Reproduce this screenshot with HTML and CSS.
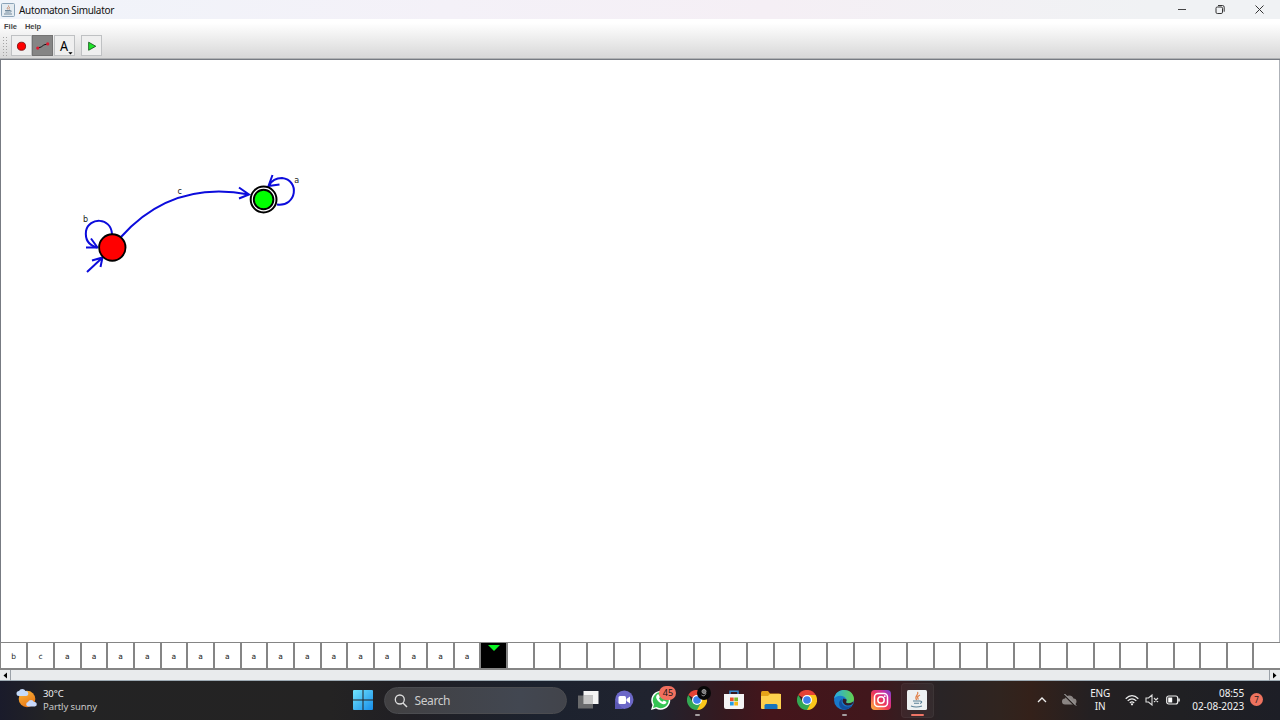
FILE: index.html
```html
<!DOCTYPE html>
<html lang="en">
<head>
<meta charset="utf-8">
<title>Automaton Simulator</title>
<link rel="stylesheet" href="styles.css">
</head>
<body>
<div class="screen">
  <header class="titlebar">
    <svg class="app-icon" width="14" height="14" viewBox="0 0 14 14"><rect x=".5" y=".5" width="13" height="13" rx="1" fill="#e4ebf1" stroke="#8ba3b8"/><path d="M7.500 2.500c1 1.500-2.500 2-.7 4M9 4c-1 .8-1.500 1.300-.5 2.500" fill="none" stroke="#c98a6a"/><path d="M4 7.500h5.500M4.300 9h4.500M3 11h8M9.500 7.500q2 .5-.5 1.800" fill="none" stroke="#71899c"/></svg>
    <span class="title">Automaton Simulator</span>
    <div class="window-controls">
      <svg width="39" height="19" viewBox="0 0 39 19"><path d="M16 9.500h8" stroke="#444"/></svg>
      <svg width="39" height="19" viewBox="0 0 39 19"><rect x="15" y="7" width="6.500" height="6.500" rx="1.300" fill="none" stroke="#333"/><path d="M17 5.500h4.500q1.700 0 1.700 1.700v4.500" fill="none" stroke="#333"/></svg>
      <svg width="39" height="19" viewBox="0 0 39 19"><path d="M15.500 5.500l8 8M23.500 5.500l-8 8" stroke="#333"/></svg>
    </div>
  </header>
  <div class="chrome">
    <nav class="menu"><span class="menu-file">File</span><span class="menu-help">Help</span></nav>
    <div class="toolbar">
      <span class="grip"></span>
      <span class="tool"><svg width="20" height="20" viewBox="0 0 20 20"><circle cx="10" cy="10.800" r="4.300" fill="#f00" stroke="#600" stroke-width=".8"/></svg></span>
      <span class="tool active"><svg width="20" height="20" viewBox="0 0 20 20"><path d="M5 12.500L9 11.500L11 9.500L15 8.500" fill="none" stroke="#111"/><circle cx="5" cy="12.700" r="1.700" fill="#e01930"/><circle cx="15.500" cy="8.300" r="1.700" fill="#e01930"/></svg></span>
      <span class="tool"><svg width="20" height="20" viewBox="0 0 20 20"><text class="tool-letter" x="9.500" y="15.500" text-anchor="middle" textLength="8.500" lengthAdjust="spacingAndGlyphs">A</text><path d="M14 17h4.500l-2.200 2.500z" fill="#000"/></svg></span>
      <span class="tool run"><svg width="20" height="20" viewBox="0 0 20 20"><path d="M7 6.500v8.500l7.500-4.200z" fill="#1fe52a" stroke="#14551c" stroke-width=".9"/></svg></span>
    </div>
  </div>
  <main class="canvas">
    <svg width="1278" height="583" viewBox="1 59 1278 583">
      <g class="edge">
        <path d="M112 234C111 217 89 217 86 231C85 239 88 245 97 247.500"/>
        <path d="M86 247.500h12M91 238.500l6.500 9"/>
        <path d="M87 272l15-14M92 260.500l10.500-3-2 9.500"/>
        <path d="M121 237Q172 180 249 194.500M239 187.500l10 7-10 4"/>
        <path d="M277 204.500C297 207 300 180 282 178Q273 178 269 185.500M272.500 175l-4 11 11-1.500"/>
      </g>
      <circle cx="112.300" cy="247.500" r="13.200" fill="#f00" stroke="#000" stroke-width="1.900"/>
      <circle cx="263.600" cy="199.500" r="12.900" fill="#fff" stroke="#000" stroke-width="2"/>
      <circle cx="263.600" cy="199.500" r="9.800" fill="#0f0" stroke="#000" stroke-width="1.900"/>
      <g class="edge-label"><text x="83" y="221.500">b</text><text x="177.500" y="194">c</text><text x="294.200" y="183">a</text></g>
    </svg>
  </main>
  <section class="tape">
    <span>b</span><span>c</span><span>a</span><span>a</span><span>a</span><span>a</span><span>a</span><span>a</span><span>a</span><span>a</span><span>a</span><span>a</span><span>a</span><span>a</span><span>a</span><span>a</span><span>a</span><span>a</span><span class="head"><svg width="12" height="6" viewBox="0 0 12 6"><path d="M0 0h12L6 6z" fill="#0cf424"/></svg></span><span></span><span></span><span></span><span></span><span></span><span></span><span></span><span></span><span></span><span></span><span></span><span></span><span></span><span></span><span></span><span></span><span></span><span></span><span></span><span></span><span></span><span></span><span></span><span></span><span></span><span></span><span></span><span></span><span></span>
  </section>
  <div class="scrollbar">
    <svg width="11" height="11" viewBox="0 0 11 11"><path d="M7 2.500v6L3.500 5.500z"/><path d="M10.500 0v11" stroke="#9ba1a8"/></svg>
    <svg width="11" height="11" viewBox="0 0 11 11"><path d="M4 2.500v6l3.500-3z"/><path d="M.5 0v11" stroke="#9ba1a8"/></svg>
  </div>
  <footer class="taskbar">
    <div class="weather">
      <svg width="22" height="22" viewBox="0 0 22 22"><defs><linearGradient id="sun" x2=".5" y2="1"><stop stop-color="#f9b83b"/><stop offset="1" stop-color="#e97817"/></linearGradient></defs><circle cx="11" cy="11" r="8.300" fill="url(#sun)"/><path d="M3 8a2.500 2.500 0 0 1 0-5 3.600 3.600 0 0 1 6.500 0 2.500 2.500 0 0 1 .5 5z" fill="#c5dbfa"/><path d="M12 18.500a2.300 2.300 0 0 1 0-4.500 3.300 3.300 0 0 1 6 0 2.300 2.300 0 0 1 1 4.500z" fill="#c9d8fa"/></svg>
      <div class="weather-text"><span class="temp">30°C</span><span class="sky">Partly sunny</span></div>
    </div>
    <svg class="start" width="20" height="20" viewBox="0 0 20 20"><defs><linearGradient id="win" x2="1" y2="1"><stop stop-color="#72e5fc"/><stop offset="1" stop-color="#168ce8"/></linearGradient></defs><path d="M0 1Q0 0 1 0h8.500v9.500H0zM10.500 0H19q1 0 1 1v8.500h-9.500zM0 10.500h9.500V20H1q-1 0-1-1zM10.500 10.500H20V19q0 1-1 1h-8.500z" fill="url(#win)"/></svg>
    <div class="search"><svg width="14" height="14" viewBox="0 0 14 14"><circle cx="5.800" cy="5.500" r="4.500" fill="none" stroke="#ddd" stroke-width="1.300"/><path d="M9 9l4 4" stroke="#ddd" stroke-width="1.500"/></svg><span>Search</span></div>
    <div class="apps">
      <span class="app"><svg width="22" height="20" viewBox="0 0 22 20"><rect x="6.500" y="1" width="15" height="13" fill="#f4f4f4"/><rect x="1" y="5.500" width="15" height="13" fill="#777" opacity=".85"/><path d="M6.500 5.500H16V14H6.500z" fill="#c5c5c5"/></svg></span>
      <span class="app"><svg width="20" height="20" viewBox="0 0 20 20"><circle cx="10.300" cy="9.700" r="9.200" fill="#6c68c8"/><path d="M1 10v9h8z" fill="#5b58b3"/><rect x="4.500" y="6" width="7.500" height="8" rx="1.500" fill="#fff"/><path d="M12.500 9l3.500-2.500v7L12.500 11z" fill="#fff"/></svg></span>
      <span class="app"><svg width="22" height="22" viewBox="0 0 22 22"><path d="M1 21l1.500-5A9.500 9.500 0 1 1 6 19.500z" fill="#fff"/><path d="M3 19l1-3.500a8 8 0 1 1 2.500 2.500z" fill="#35c454"/><path d="M7.300 5.500q1-.8 1.600.3l1 2.200-.9 1.400q1.200 2.400 3.500 3.300l1.300-1.300 2.500 1.300q.4.900-.5 1.900-2 1.500-5-.3-4-2.300-4.700-6 .1-1.800 1.200-2.800z" fill="#fff"/></svg><span class="badge">45</span></span>
      <span class="app"><svg width="20" height="20" viewBox="0 0 20 20"><path d="M10 10L1.300 5A10 10 0 0 1 18.700 5z" fill="#e64335"/><path d="M10 10V5h8.700A10 10 0 0 1 10 20z" fill="#fbc61b"/><path d="M10 20A10 10 0 0 1 1.300 5L6 12.500l8 0z" fill="#34a853"/><circle cx="10" cy="10" r="5" fill="#fff"/><circle cx="10" cy="10" r="3.800" fill="#3d7fea"/></svg><svg class="profile" width="14" height="14" viewBox="0 0 14 14"><circle cx="7" cy="7" r="7" fill="#080808"/><circle cx="7" cy="5.500" r="2" fill="#777" stroke="#999"/><path d="M4.500 9q3 2.500 4.500-2" stroke="#888" fill="none"/></svg><i class="mark"></i></span>
      <span class="app"><svg width="20" height="20" viewBox="0 0 20 20"><path d="M6 4V1.200h8V4" fill="none" stroke="#3689cf" stroke-width="1.500"/><path d="M0 4h20v13q0 2-2 2H2q-2 0-2-2z" fill="#f4f4f4"/><path d="M6 7.500h3.700v3.700H6z" fill="#ee5127"/><path d="M10.300 7.500H14v3.700h-3.700z" fill="#79b82d"/><path d="M6 11.800h3.700v3.700H6z" fill="#239fe5"/><path d="M10.300 11.800H14v3.700h-3.700z" fill="#f6b916"/></svg></span>
      <span class="app"><svg width="20" height="20" viewBox="0 0 20 20"><path d="M0 3q0-2 1.500-2H7l2 2.500h9q2 0 2 1.500v6H0z" fill="#e5a31a"/><path d="M0 6h7l2-2h11v15H1q-1 0-1-1z" fill="#fed14e"/><path d="M3.500 19v-3.500q0-1.500 1.500-1.500h10q1.500 0 1.500 1.500V19z" fill="#1674be"/></svg></span>
      <span class="app"><svg width="20" height="20" viewBox="0 0 20 20"><path d="M10 10L1.300 5A10 10 0 0 1 18.700 5z" fill="#e64335"/><path d="M10 10V5h8.700A10 10 0 0 1 10 20z" fill="#fbc61b"/><path d="M10 20A10 10 0 0 1 1.300 5L6 12.500l8 0z" fill="#34a853"/><circle cx="10" cy="10" r="5" fill="#fff"/><circle cx="10" cy="10" r="3.800" fill="#3d7fea"/></svg></span>
      <span class="app"><svg width="20" height="20" viewBox="0 0 20 20"><defs><linearGradient id="edge"><stop stop-color="#25a9e9"/><stop offset="1" stop-color="#65d14b"/></linearGradient></defs><circle cx="10" cy="10" r="10" fill="#1878ca"/><path d="M0 9C1 2 6 0 10 0c7 0 10 5 10 9 0 4-4 5-7 4-2-.8 0-1.500-.5-3.500C11 5 3 4 0 9z" fill="url(#edge)"/><path d="M8 9c-2 5 3 9 9 7q1 0 .6.600C13 21 8 20 6 17c-2-4-.5-7 2-8z" fill="#124f9e"/><path d="M9.500 8.500c-2 2-.5 6.500 4 7q3 0 5-1.500l.8-2.500q-3 2.500-6.300 1.500c-2-.8 0-1.500-.5-3.500z" fill="#311d2a"/></svg><i class="mark"></i></span>
      <span class="app"><svg width="20" height="20" viewBox="0 0 20 20"><defs><linearGradient id="insta" x1="0" y1="1" x2="1" y2="0"><stop stop-color="#ffbd3d"/><stop offset=".45" stop-color="#f13953"/><stop offset=".75" stop-color="#ca30a1"/><stop offset="1" stop-color="#654bd8"/></linearGradient></defs><rect width="20" height="20" rx="4" fill="url(#insta)"/><rect x="3.500" y="3.500" width="13" height="13" rx="3.500" fill="none" stroke="#fff" stroke-width="1.500"/><circle cx="10" cy="10" r="3.200" fill="none" stroke="#fff" stroke-width="1.500"/><circle cx="13.800" cy="6.200" r=".9" fill="#fff"/></svg></span>
      <span class="app selected"><svg width="20" height="20" viewBox="0 0 20 20"><rect width="20" height="20" rx="1.500" fill="#edf0f1"/><path d="M10.500 2c2 2.500-4 4-.7 8M13 5c-3 1.500-3 2.300-1.500 4.500" fill="none" stroke="#e0834d" stroke-width="1.300"/><path d="M6 11h7M7 13.200h5M4 16q5 2 11 0M13 11q3.500.5 0 2.500" fill="none" stroke="#5a8096" stroke-width="1.100"/></svg><i class="mark running"></i></span>
    </div>
    <div class="tray">
      <svg class="chevron" width="10" height="6" viewBox="0 0 10 6"><path d="M1 5l4-4 4 4" fill="none" stroke="#eee" stroke-width="1.300"/></svg>
      <svg class="cloud" width="15" height="12" viewBox="0 0 15 12"><path d="M3 10.500a3 3 0 0 1 0-6 4.500 4.500 0 0 1 8.500 0 3 3 0 0 1 0 6z" fill="#8b8583"/><path d="M1.500 0L13 11.500" stroke="#28211f" stroke-width="2"/><path d="M2.500 0L14 11.500" stroke="#ccc"/></svg>
      <div class="lang"><span>ENG</span><span>IN</span></div>
      <svg class="wifi" width="14" height="12" viewBox="0 0 14 12"><g fill="none" stroke="#eee" stroke-width="1.200"><path d="M.7 4.700Q7-1.500 13.300 4.700M2.700 6.900q4.300-4.200 8.600 0M4.800 9q2.200-2.200 4.400 0"/></g><circle cx="7" cy="10.300" r="1.100" fill="#eee"/></svg>
      <svg class="volume" width="14" height="12" viewBox="0 0 14 12"><path d="M1 4h2.500L7 1v10L3.500 8H1zM9 4l4 4M13 4L9 8" fill="none" stroke="#ddd" stroke-width="1.100"/></svg>
      <svg class="battery" width="14" height="10" viewBox="0 0 14 10"><rect x=".7" y="1" width="11" height="8" rx="2" fill="none" stroke="#eee" stroke-width="1.200"/><rect x="2.200" y="2.500" width="4" height="5" fill="#fff"/><path d="M13 3.500v3" stroke="#eee" stroke-width="1.500"/></svg>
      <div class="clock"><span>08:55</span><span class="date">02-08-2023</span></div>
      <span class="notify">7</span>
    </div>
  </footer>
</div>
</body>
</html>
```
FILE: styles.css
```css
* { box-sizing: border-box; }
body { margin: 0; overflow: hidden; font-family: "Noto Sans", sans-serif; }
svg { display: block; flex: none; }
.screen { width: 1280px; height: 720px; display: flex; flex-direction: column; background: #fff; }
.titlebar { height: 19px; flex: none; display: flex; align-items: center; padding-left: 1px; padding-right: 1.5px; background: linear-gradient(90deg, #f0f4fa, #f4f1f8 35%, #f5eff5 60%, #f0f2f4 90%); }
.title { margin-left: 4px; font-size: 10px; line-height: 18px; letter-spacing: -.33px; color: #111; }
.window-controls { margin-left: auto; display: flex; }
.chrome { height: 40px; flex: none; background: linear-gradient(#fff 10%, #d9d9d9 94%); box-shadow: inset 0 -1px #b0b2b4; }
.menu { height: 15px; display: flex; gap: 8px; padding-left: 4px; font: bold 7.500px/15px "Liberation Sans", sans-serif; color: #444; }
.toolbar { height: 24px; display: flex; align-items: center; padding-left: 2px; }
.grip { width: 7px; height: 20px; margin-right: 2px; background: radial-gradient(circle, #a5a5a5 .7px, transparent 1px) 0 0 / 3px 3px; }
.tool { width: 21px; height: 21px; display: flex; border: 1px solid #bfc1c3; background: #efefef; margin-right: .3px; position: relative; top: -.5px; }
.tool svg { width: 19px; height: 19px; }
.tool.active { background: #858585; border-color: #737373; }
.tool.run { margin-left: 6px; }
.tool-letter { font: 16px "Noto Sans", sans-serif; }
.canvas { height: 583px; flex: none; border: solid #777b82; border-width: 1px 0 0 1px; box-shadow: inset -1px 0 #aeb2b8; }
.canvas svg { margin-top: -1px; }
.edge { fill: none; stroke: #0c0cdc; stroke-width: 2; }
.edge-label { font: 8px "DejaVu Sans", sans-serif; fill: #222; }
.tape { height: 27px; flex: none; display: flex; overflow: hidden; border: solid #858585; border-width: 1.5px 0 1px 1px; background: #fff; }
.tape span { width: 26.667px; flex: none; border-right: 2px solid #858585; text-align: center; font: 7.500px/28px "DejaVu Sans", sans-serif; color: #222; }
.tape span:first-child { width: 27.3px; }
.tape span:last-child { border-right: 0; }
.tape .head { background: #000; display: flex; justify-content: center; }
.head svg { margin-top: 2px; }
.scrollbar { height: 12px; flex: none; display: flex; justify-content: space-between; background: #e9ebed; border-top: 1px solid #858585; border-bottom: 1px solid #9eabb4; }
.taskbar { height: 39px; flex: none; display: flex; align-items: center; color: #f2f2f2; background: linear-gradient(90deg, #1a1b2b 0, #232324 50px, #242323 330px, #201f24 410px, #1c222e 540px, #20232f 650px, #35191f 725px, #44151b 770px, #41171c 870px, #292426 940px, #30241f 1000px, #34211a 1030px, #242022 1090px, #202023 1180px, #1d1e26 1280px); }
.weather { width: 353px; height: 39px; display: flex; align-items: center; padding-left: 16px; gap: 5px; }
.weather > svg { position: relative; top: -2px; }
.weather-text { display: flex; flex-direction: column; font-size: 9.500px; line-height: 13px; position: relative; top: -1px; }
.temp { letter-spacing: -.1px; }
.sky { color: #c9c9c9; letter-spacing: -.1px; }
.start { position: relative; top: -.5px; }
.search { width: 183px; height: 27px; margin-left: 11px; padding-left: 9px; border-radius: 14px; display: flex; align-items: center; gap: 6.5px; border: 1px solid #4b4c50; background: linear-gradient(90deg, #414042, #424751 75%, #42444b); color: #ccc; font-size: 12px; letter-spacing: -.4px; }
.apps { display: flex; margin-left: 2.200px; }
.app { width: 36.650px; height: 39px; position: relative; display: flex; align-items: center; justify-content: center; }
.app.selected::before { content: ""; position: absolute; inset: 2px; border-radius: 4px; background: #ffffff0b; border: 1px solid #ffffff0b; }
.app svg { position: relative; top: -.5px; }
.badge { position: absolute; left: 17px; top: 5px; width: 17px; height: 14px; border-radius: 7px; background: #f2705f; color: #151515; text-align: center; font-size: 9px; line-height: 14px; }
.app .profile { position: absolute; left: 18px; top: 5px; }
.mark { position: absolute; left: 16px; bottom: 4px; width: 5px; height: 2px; border-radius: 1px; background: #a59fa1; }
.mark.running { left: 12px; width: 13px; background: #ef7466; }
.tray { flex: 1; display: flex; align-items: center; padding-left: 101.5px; font-size: 10px; line-height: 13px; position: relative; top: -1px; }
.cloud { margin-left: 15px; }
.lang { width: 26px; margin-left: 10px; display: flex; flex-direction: column; align-items: center; letter-spacing: -.2px; }
.wifi { margin-left: 11.5px; }
.volume { margin-left: 6px; }
.battery { margin-left: 7px; }
.clock { width: 60px; margin-left: 4.5px; display: flex; flex-direction: column; align-items: flex-end; letter-spacing: -.1px; }
.date { letter-spacing: -.03px; }
.notify { width: 13px; height: 13px; margin-left: 6px; border-radius: 50%; background: #ee735f; color: #241e20; text-align: center; font-size: 8px; }
```
